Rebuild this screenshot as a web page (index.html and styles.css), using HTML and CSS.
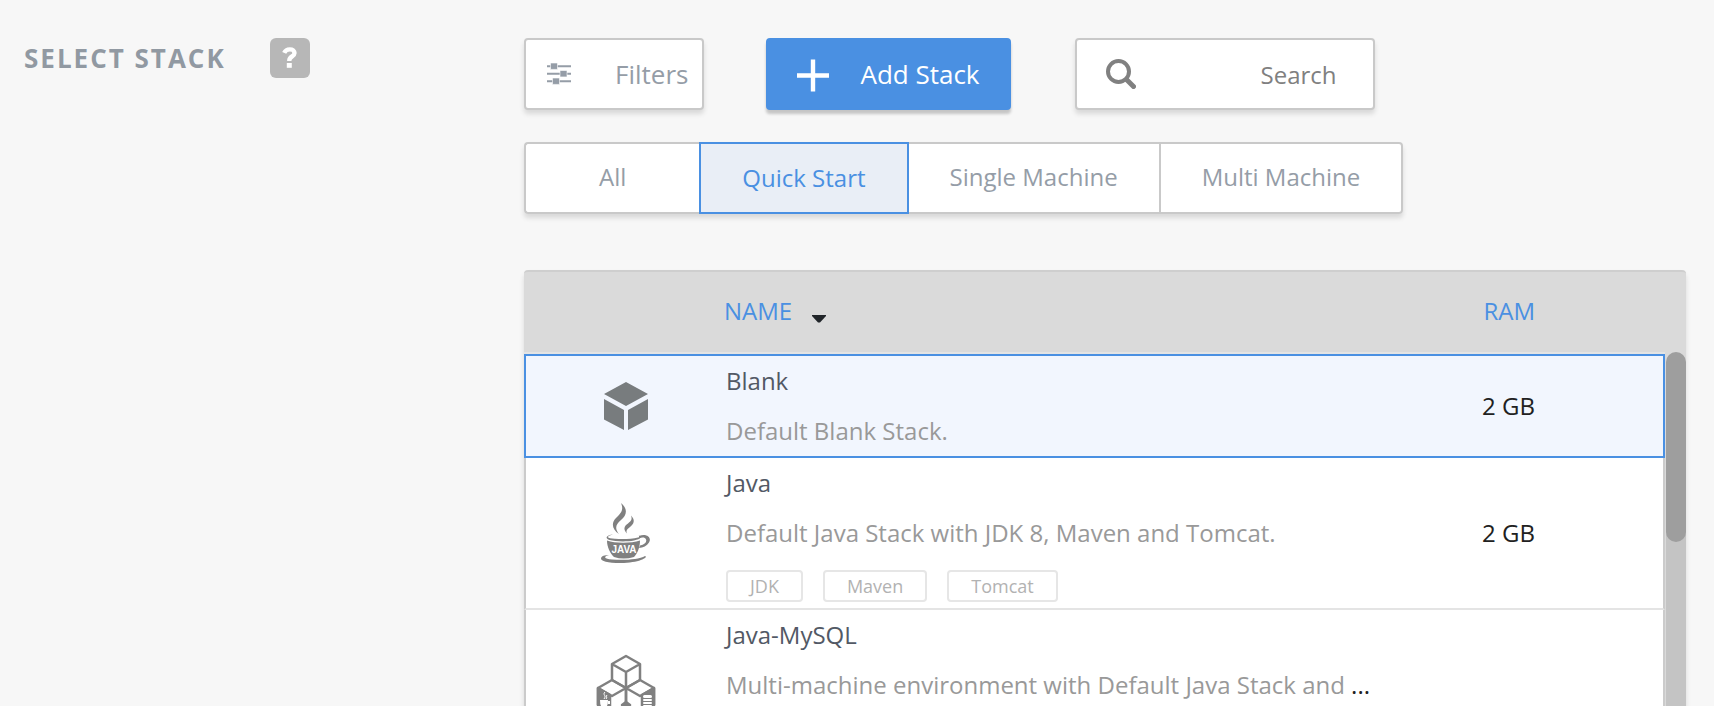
FILE: index.html
```html
<!DOCTYPE html>
<html lang="en">
<head>
<meta charset="utf-8">
<title>Select Stack</title>
<link rel="stylesheet" href="styles.css">
</head>
<body>
<main class="page">
  <header class="section-title">
    <h1 class="title">Select Stack</h1>
    <button class="help" type="button" aria-label="Help">
      <svg width="16" height="22" viewBox="0 0 16 22" fill="none" stroke="#fff"><path d="M2.200 5.800C3.400 3.200 5.300 2.400 7.800 2.400C10.800 2.400 12.500 3.900 12.500 6C12.500 9.500 7.300 9.300 7.300 13.500V14" stroke-width="4.400"/><path d="M7.300 16v4.800" stroke-width="5"/></svg>
    </button>
  </header>

  <section class="content">
    <div class="toolbar">
      <button class="btn btn-filters" type="button">
        <svg width="24" height="22" viewBox="0 0 24 22" fill="#959da7"><path d="M0 2.200h24v2H0zM0 9.700h24v2H0zM0 17.200h24v2H0z"/><path d="M3.500 0h7v6.400h-7zM13 7.500h7v6.400h-7zM5.500 15h7v6.400h-7z" stroke="#fff" stroke-width=".6"/></svg>
        <span>Filters</span>
      </button>
      <button class="btn btn-add" type="button">
        <svg width="34" height="36" viewBox="0 0 34 36" stroke="#fff" stroke-width="4.400"><path d="M17 3.500v32M1 19.500h32"/></svg>
        <span>Add Stack</span>
      </button>
      <label class="search">
        <svg width="30" height="30" viewBox="0 0 30 30" fill="none" stroke="#808080"><circle cx="12.500" cy="12.500" r="10.500" stroke-width="4"/><path d="M20.500 20.500l7 7" stroke-width="5" stroke-linecap="round"/></svg>
        <input class="search-input" type="text" placeholder="Search" aria-label="Search">
      </label>
    </div>

    <div class="tabs">
      <button class="tab tab-all" type="button">All</button>
      <button class="tab tab-active" type="button">Quick Start</button>
      <button class="tab" type="button">Single Machine</button>
      <button class="tab" type="button">Multi Machine</button>
    </div>

    <div class="panel">
      <table class="stacks">
        <thead>
          <tr>
            <th class="col-icon"></th>
            <th class="col-name">Name <svg class="caret" width="14" height="8" viewBox="0 0 14 8"><path d="M0 0h14v1L8 7.500H6L0 1z" fill="#212529"/></svg></th>
            <th class="col-ram">RAM</th>
          </tr>
        </thead>
        <tbody>
          <tr class="selected">
            <td class="col-icon">
              <svg width="46" height="50" viewBox="0 0 46 50" fill="#787c7e"><path d="M23 1L45 13 23 25 1 13zM1 18L21 29V49L1 38.500zM45 18L25 29V49L45 38.500z"/></svg>
            </td>
            <td class="col-name">
              <div class="name">Blank</div>
              <div class="desc"><span>Default Blank Stack.</span></div>
            </td>
            <td class="col-ram">2 GB</td>
          </tr>
          <tr>
            <td class="col-icon">
              <svg width="50" height="60" viewBox="0 0 50 60" fill="#808080">
                <path d="M20 0C27 6 26 12 20 17C14 22 14 26 18 31C11 26 10 20 15 15C20 10 23 7 20 0z"/>
                <path d="M30 12.500C34.500 17 33 21 29 24C25.500 26.500 25 28 26 30.500C22 26.500 23 23 27 20.500C30 18 31.500 16.500 30 12.500z"/>
                <path d="M12 31.500C4 33.500 6 35.500 14 35.800C22 36.500 31 36 37 34.500C40 33.500 39 32.500 36 32C43 33 40 36 33 37.500C25 39 14 38.500 8.500 37C3 35 6 32 12 31.500z"/>
                <path d="M6 37.500C14 40.500 30 40.500 39 37.500C39 45 36 51 33 54Q22.500 57 13 54C9 50 6 44 6 37.500z"/>
                <path d="M38 33C46 30 51 35 48 39.500C46 43 42 44.500 38 45L39 42.500C44 41.500 46 39 45 36.500C44 34 41 34 38 35.500z"/>
                <path d="M8 52C2 53.500 3 56 11 56.500C23 57.500 38 56.500 44 53C48 54.500 37 60 20 60C6 60 0 58 0 55.500C0 53 4 52 8 52z"/>
                <text class="cup-label" x="23" y="50" text-anchor="middle">JAVA</text>
              </svg>
            </td>
            <td class="col-name">
              <div class="name">Java</div>
              <div class="desc"><span>Default Java Stack with JDK 8, Maven and Tomcat.</span></div>
              <div class="tags"><span class="tag">JDK</span><span class="tag">Maven</span><span class="tag">Tomcat</span></div>
            </td>
            <td class="col-ram">2 GB</td>
          </tr>
          <tr>
            <td class="col-icon">
              <svg width="60" height="62" viewBox="0 0 60 62" fill="none" stroke="#808080" stroke-width="2.500" stroke-linejoin="round">
                <path d="M30 2L44 10V26L30 34 16 26V10zM16 10L30 18 44 10M30 18V34"/>
                <path d="M16 26L30 34V51L16 59 2 51V34zM2 34L16 42 30 34"/>
                <path d="M44 26L58 34V51L44 59 30 51V34zM30 34L44 42 58 34"/>
                <path d="M2 34L14 41V58L2 51zM58 34L46 41V58L58 51z" fill="#808080"/>
                <path d="M26 51l4-3 4 3z" fill="#808080"/>
                <path d="M9 38c-3 3 2 3-1 7M11 41c-2 2 1 2-1 4" stroke="#fff" stroke-width="1"/>
                <path d="M4 46h8q0 6-2 7H6q-2-1-2-7zM12 47h2v3h-2" fill="#fff" stroke="none"/>
                <g fill="#fff" stroke="none"><rect x="47" y="41" width="9" height="3" rx="1.500"/><rect x="47" y="45" width="9" height="2" rx="1"/><rect x="47" y="48" width="9" height="2" rx="1"/><rect x="47" y="51" width="9" height="2" rx="1"/></g>
              </svg>
            </td>
            <td class="col-name">
              <div class="name">Java-MySQL</div>
              <div class="desc"><span>Multi-machine environment with Default Java Stack and</span> ...</div>
              <div class="tags"></div>
            </td>
            <td class="col-ram"></td>
          </tr>
        </tbody>
      </table>
      <div class="scrollbar"><div class="thumb"></div></div>
    </div>
  </section>
</main>
</body>
</html>
```
FILE: styles.css
```css
* { box-sizing: border-box; }

body {
  margin: 0;
  background: #f7f7f7;
  color: #212121;
  font-family: "Open Sans", "Noto Sans", sans-serif;
  font-size: 24px;
}

button, input { font: inherit; margin: 0; }
svg { display: block; flex: none; }

.page {
  display: flex;
  height: 100vh;
  overflow: hidden;
  padding: 38px 28px 0 24px;
}

.section-title {
  flex: 0 0 500px;
  display: flex;
  align-items: center;
  align-self: flex-start;
  gap: 44px;
}

.title {
  margin: 0;
  color: #9199a2;
  font-size: 26px;
  font-weight: 700;
  line-height: 40px;
  letter-spacing: 2px;
  text-transform: uppercase;
}

.help {
  display: flex;
  align-items: center;
  justify-content: center;
  width: 40px;
  height: 40px;
  padding: 0;
  border: 0;
  border-radius: 6px;
  background: #b7b7b7;
}

.content {
  flex: 1;
  min-width: 0;
  display: flex;
  flex-direction: column;
}

.toolbar { display: flex; }

.btn, .search {
  display: flex;
  align-items: center;
  height: 72px;
  border: 2px solid #c9c9c9;
  border-radius: 4px;
  background: #fff;
  box-shadow: 0 4px 5px rgba(0, 0, 0, 0.12);
}

.btn { font-size: 26px; }

.btn-filters {
  gap: 44px;
  margin-right: 62px;
  padding: 0 14px 0 21px;
  color: #959da7;
}

.btn-add {
  gap: 30px;
  margin-right: 64px;
  padding: 0 29px 0 28px;
  border-color: #4a90e2;
  background: #4a90e2;
  color: #fff;
  box-shadow: 0 4px 3px rgba(0, 0, 0, 0.2);
}

.search {
  width: 300px;
  padding: 0 36px 0 29px;
}

.search-input {
  flex: 1;
  min-width: 0;
  padding: 0;
  border: 0;
  outline: 0;
  background: none;
  text-align: right;
}

.search-input::placeholder { color: #808080; opacity: 1; }

.tabs {
  align-self: flex-start;
  display: flex;
  margin-top: 32px;
  border-radius: 4px;
  box-shadow: 0 4px 5px rgba(0, 0, 0, 0.12);
}

.tab {
  height: 72px;
  padding: 0 41px 3px;
  border: 2px solid #c9c9c9;
  border-left-width: 0;
  background: #fff;
  color: #959da7;
}

.tab-all {
  padding: 0 73px 3px;
  border-left-width: 2px;
  border-right-width: 0;
  border-radius: 4px 0 0 4px;
}

.tab-active {
  padding-bottom: 1px;
  border: 2px solid #4a90e2;
  background: #e9eef6;
  color: #4a90e2;
}

.tab:last-child { border-radius: 0 4px 4px 0; }

.panel {
  flex: 1 0 auto;
  display: flex;
  align-items: stretch;
  gap: 1px;
  margin-top: 56px;
  border-top: 2px solid #cecece;
  border-radius: 4px 4px 0 0;
  background: #dadada;
  box-shadow: 0 4px 5px rgba(0, 0, 0, 0.12);
}

.stacks {
  flex: 1;
  min-width: 0;
  table-layout: fixed;
  border-collapse: separate;
  border-spacing: 0;
}

.stacks th {
  height: 82px;
  padding: 0 0 4px;
  border-bottom: 2px solid #e4e4e4;
  color: #4a90e2;
  font-weight: 400;
  text-align: left;
  text-transform: uppercase;
}

.stacks td {
  padding: 0;
  border-bottom: 2px solid #e4e4e4;
  background: #fff;
}

.stacks td:first-child { border-left: 2px solid #cbcbcb; }
.stacks td:last-child { border-right: 2px solid #cbcbcb; }

.stacks .selected td {
  border-color: #4a90e2;
  border-top: 2px solid #4a90e2;
  background: #f2f6fe;
}

.stacks .col-icon { width: 200px; }
.stacks .col-icon svg { margin: 0 auto; }
.stacks td.col-icon { padding-left: 2px; }
.stacks td.col-name { padding-left: 2px; }

.stacks .col-ram {
  width: 220px;
  padding-right: 130px;
  text-align: right;
  white-space: nowrap;
}

.stacks td.col-ram {
  padding-right: 128px;
  padding-bottom: 2px;
}

.caret {
  display: inline-block;
  margin-left: 14px;
  vertical-align: -3px;
}

.name, .desc {
  line-height: 50px;
  white-space: nowrap;
}

.name { color: #525965; }
.desc span { color: #999; }

.tags {
  display: flex;
  gap: 20px;
  min-height: 50px;
  padding: 12px 0 6px;
}

.tag {
  padding: 0 22px;
  border: 2px solid #e6e6e6;
  border-radius: 4px;
  color: #b2b2b2;
  font-size: 18px;
  line-height: 28px;
}

.cup-label {
  fill: #fff;
  font-family: "Liberation Sans", sans-serif;
  font-size: 10px;
  font-weight: 700;
}

.scrollbar {
  flex: 0 0 20px;
  margin-top: 80px;
  background: linear-gradient(#dadada 10px, #c4c4c4 10px);
}

.thumb {
  height: 190px;
  border-radius: 10px;
  background: #9e9e9e;
}
```
